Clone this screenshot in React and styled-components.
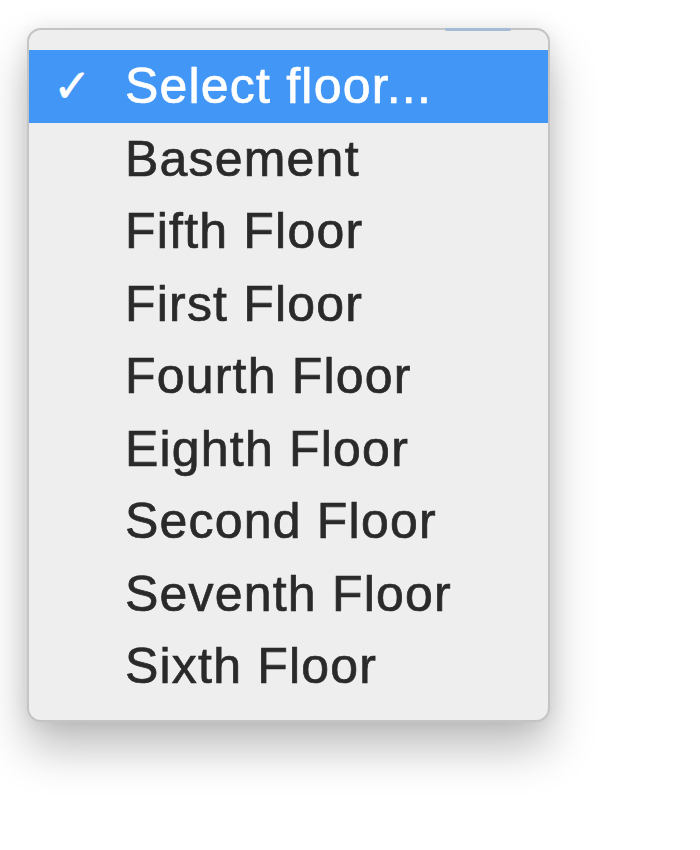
import React from "react";
import styled, { createGlobalStyle } from "styled-components";

const GlobalStyle = createGlobalStyle`
  body {
    margin: 0;
    background: #ffffff;
    font-family: "Liberation Sans", Arial, sans-serif;
  }
`;

const floors = [
  "Basement",
  "Fifth Floor",
  "First Floor",
  "Fourth Floor",
  "Eighth Floor",
  "Second Floor",
  "Seventh Floor",
  "Sixth Floor",
];

export default function App() {
  return (
    <Page>
      <GlobalStyle />
      <Menu>
        <ButtonPeek />
        <Item $selected>
          <Check>✓</Check>
          <Label>Select floor...</Label>
        </Item>
        {floors.map((f) => (
          <Item key={f}>
            <Check />
            <Label>{f}</Label>
          </Item>
        ))}
      </Menu>
    </Page>
  );
}

const Page = styled.div`
  width: 700px;
  height: 850px;
  padding: 28px 0 0 27px;
  box-sizing: border-box;
`;

const Menu = styled.div`
  position: relative;
  width: 523px;
  box-sizing: border-box;
  padding: 20px 0 17px;
  background: #eeeeee;
  border: 2px solid #c4c4c4;
  border-radius: 14px;
  box-shadow: 0 26px 46px rgba(0, 0, 0, 0.26), 0 0 20px rgba(0, 0, 0, 0.08);
`;

const ButtonPeek = styled.div`
  position: absolute;
  top: -2px;
  left: 416px;
  width: 66px;
  height: 3px;
  background: #a6bcd6;
  border-radius: 2px;
`;

const Item = styled.div`
  display: flex;
  align-items: center;
  height: 72.5px;
  padding-left: 24px;
  background: ${(p) => (p.$selected ? "#4196f6" : "transparent")};
  color: ${(p) => (p.$selected ? "#ffffff" : "#2a2a2a")};
`;

const Check = styled.span`
  width: 72px;
  font-family: "DejaVu Sans", sans-serif;
  font-size: 46px;
  line-height: 1;
  -webkit-text-stroke: 0.6px currentColor;
`;

const Label = styled.span`
  font-size: 50px;
  letter-spacing: 1.2px;
  line-height: 1;
  -webkit-text-stroke: 0.7px currentColor;
`;
